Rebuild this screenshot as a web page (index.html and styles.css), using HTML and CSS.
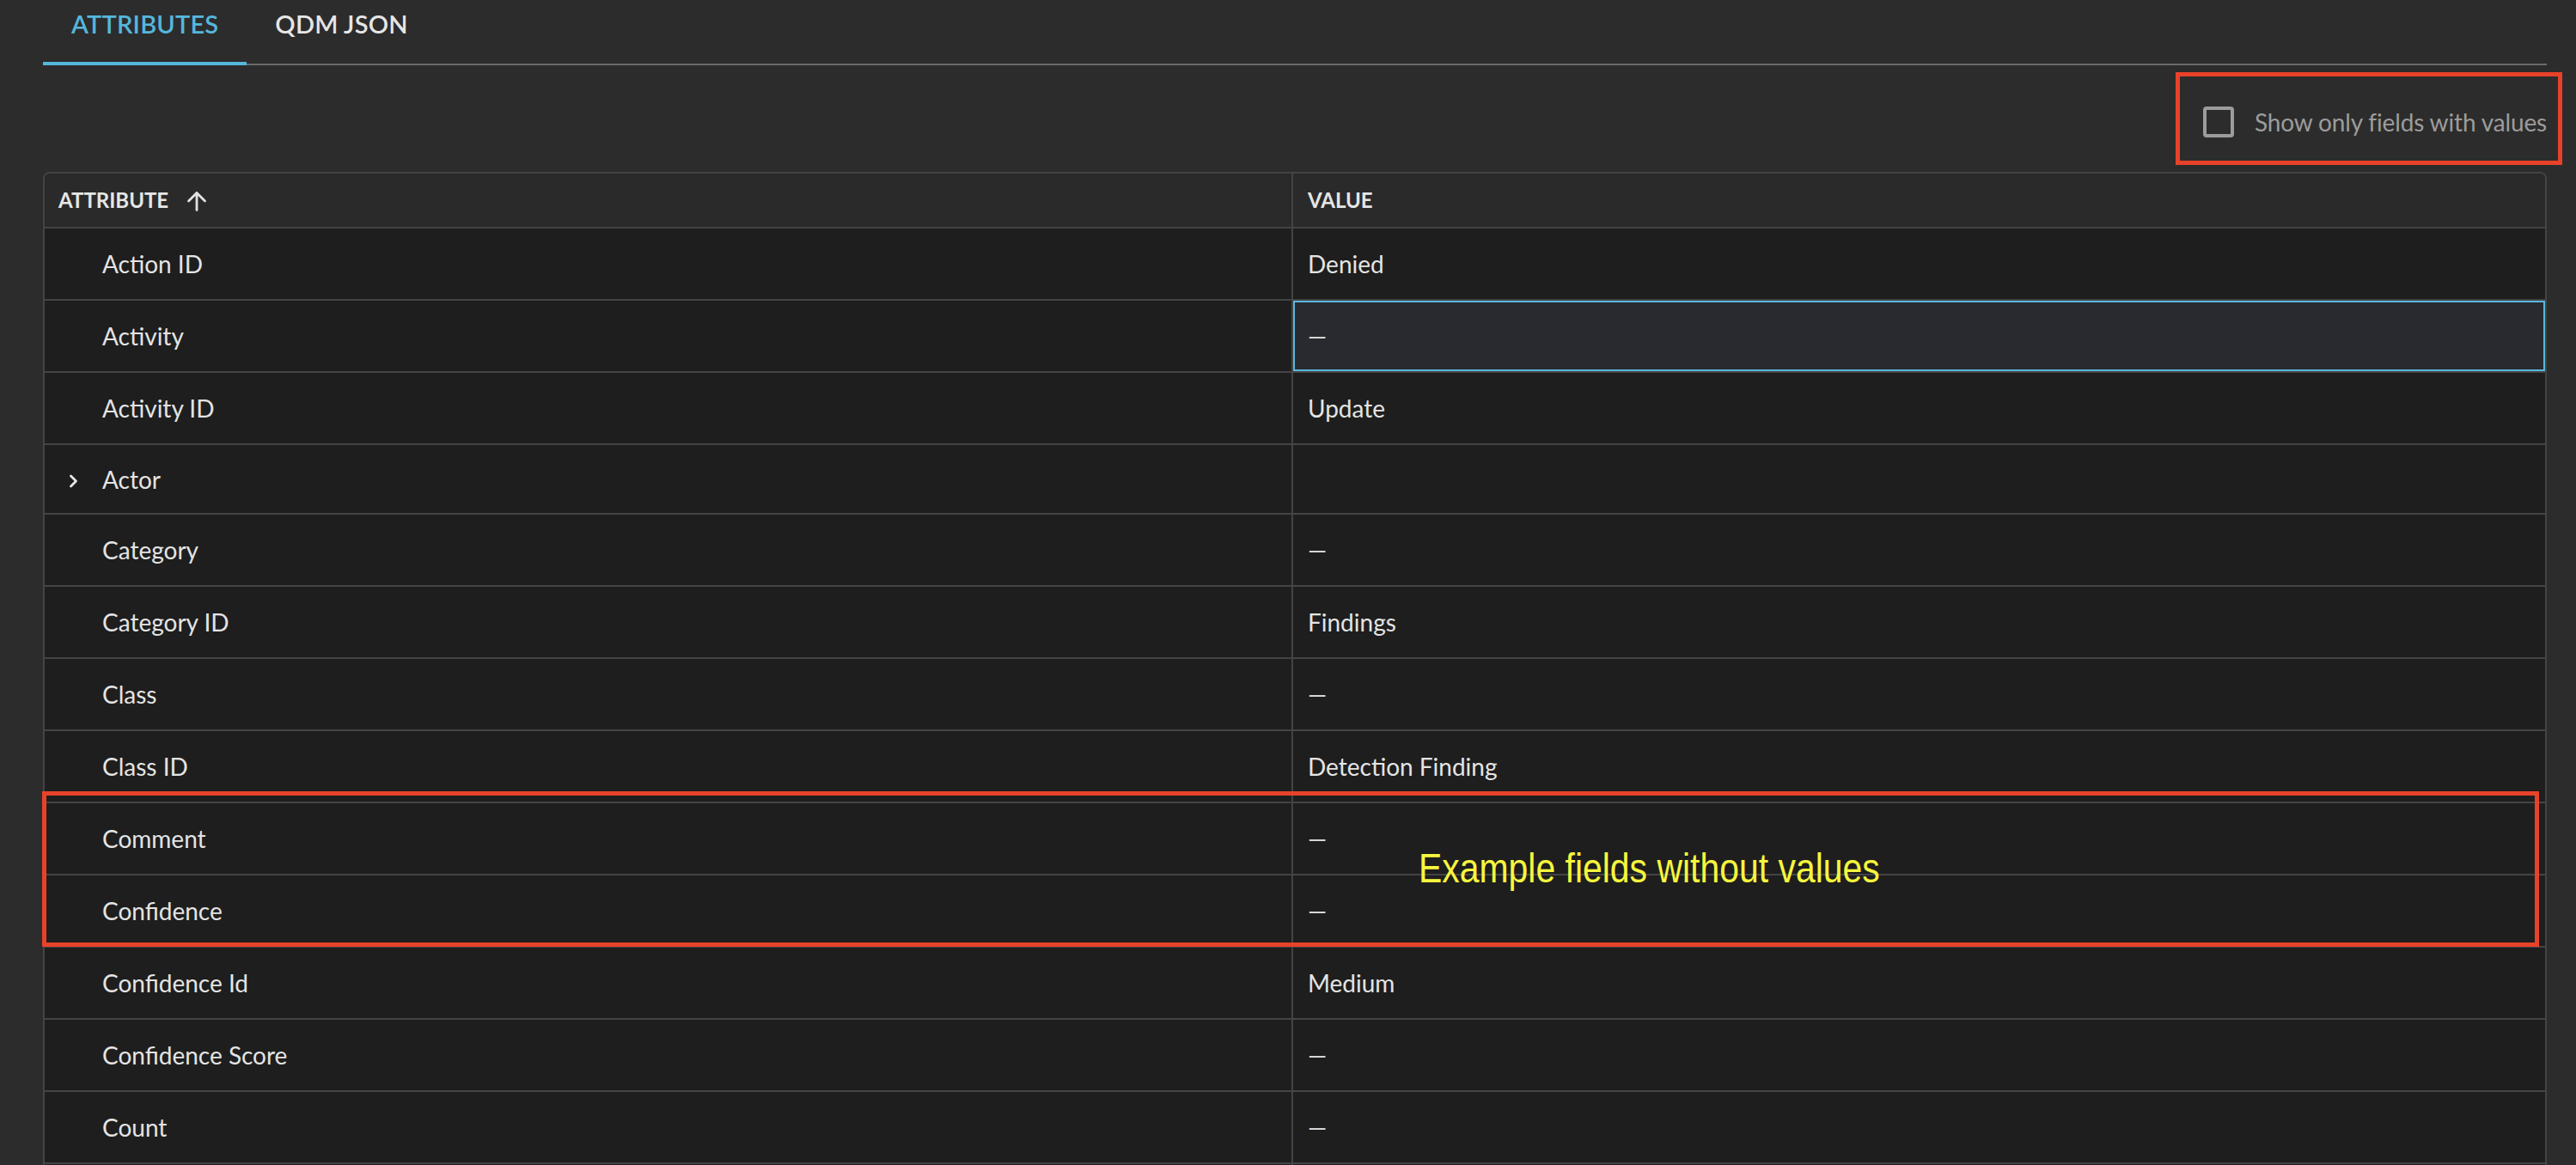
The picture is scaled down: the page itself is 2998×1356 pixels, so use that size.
FILE: index.html
```html
<!DOCTYPE html>
<html>
<head>
<meta charset="utf-8">
<link rel="stylesheet" href="styles.css">
</head>
<body>
<div class="page">
  <div class="tabs">
    <div class="tab active">ATTRIBUTES</div>
    <div class="tab">QDM JSON</div>
  </div>
  <div class="filter-row">
    <span class="checkbox"></span>
    <span class="filter-label">Show only fields with values</span>
  </div>
  <div class="table">
    <div class="row head">
      <div class="cell attr"><span class="head-text">ATTRIBUTE</span>
        <svg class="sort-icon" viewBox="0 0 24 24" width="24" height="24"><path d="M12 22.5V2.5M2.5 12L12 2.5l9.5 9.5" fill="none" stroke="#e2e2e2" stroke-width="2.8" stroke-linecap="round" stroke-linejoin="round"/></svg>
      </div>
      <div class="cell val"><span class="head-text">VALUE</span></div>
    </div>
    <div class="row"><div class="cell attr"><span class="slot"></span>Action ID</div><div class="cell val">Denied</div></div>
    <div class="row"><div class="cell attr"><span class="slot"></span>Activity</div><div class="cell val selected"><span class="dash">—</span></div></div>
    <div class="row"><div class="cell attr"><span class="slot"></span>Activity ID</div><div class="cell val">Update</div></div>
    <div class="row short"><div class="cell attr"><span class="slot"><svg class="chev" viewBox="0 0 12 16" width="12" height="16"><path d="M2.5 2l6 6-6 6" fill="none" stroke="#e6e6e6" stroke-width="2.8" stroke-linecap="round" stroke-linejoin="round"/></svg></span>Actor</div><div class="cell val"></div></div>
    <div class="row"><div class="cell attr"><span class="slot"></span>Category</div><div class="cell val"><span class="dash">—</span></div></div>
    <div class="row"><div class="cell attr"><span class="slot"></span>Category ID</div><div class="cell val">Findings</div></div>
    <div class="row"><div class="cell attr"><span class="slot"></span>Class</div><div class="cell val"><span class="dash">—</span></div></div>
    <div class="row"><div class="cell attr"><span class="slot"></span>Class ID</div><div class="cell val">Detection Finding</div></div>
    <div class="row"><div class="cell attr"><span class="slot"></span>Comment</div><div class="cell val"><span class="dash">—</span></div></div>
    <div class="row"><div class="cell attr"><span class="slot"></span>Confidence</div><div class="cell val"><span class="dash">—</span></div></div>
    <div class="row"><div class="cell attr"><span class="slot"></span>Confidence Id</div><div class="cell val">Medium</div></div>
    <div class="row"><div class="cell attr"><span class="slot"></span>Confidence Score</div><div class="cell val"><span class="dash">—</span></div></div>
    <div class="row"><div class="cell attr"><span class="slot"></span>Count</div><div class="cell val"><span class="dash">—</span></div></div>
    <div class="row"><div class="cell attr"></div><div class="cell val"></div></div>
  </div>
</div>
<div class="annot annot-filter"></div>
<div class="annot annot-rows"></div>
<div class="annot-text">Example fields without values</div>
</body>
</html>
```
FILE: styles.css
```css
html, body {
  margin: 0;
  padding: 0;
  background: #2c2c2c;
  height: 1356px;
  overflow: hidden;
}
body {
  font-family: "Lato", "Noto Sans", sans-serif;
  color: #e4e4e4;
  position: relative;
}
.page {
  margin-left: 50px;
  width: 2914px;
}
.tabs {
  display: flex;
  height: 74px;
  border-bottom: 2px solid #6a6a6a;
}
.tab {
  position: relative;
  padding: 10px 33px 0;
  font-size: 29px;
  font-weight: 600;
  line-height: 35px;
  color: #e6e6e6;
  letter-spacing: 0.2px;
}
.tab.active {
  color: #55b7dc;
}
.tab.active::after {
  content: "";
  position: absolute;
  left: 0;
  right: 0;
  bottom: -2px;
  height: 4px;
  background: #55b7dc;
}
.filter-row {
  display: flex;
  justify-content: flex-end;
  align-items: center;
  height: 124px;
  padding-top: 8px;
  box-sizing: border-box;
}
.checkbox {
  width: 36px;
  height: 36px;
  box-sizing: border-box;
  border: 4px solid #9c9c9c;
  border-radius: 4px;
  margin-right: 24px;
}
.filter-label {
  font-size: 28px;
  color: #9c9c9c;
  line-height: 34px;
  letter-spacing: -0.15px;
}
.table {
  border: 2px solid #444444;
  border-bottom: none;
  border-radius: 8px 8px 0 0;
  overflow: hidden;
  background: #1e1e1e;
}
.row {
  display: flex;
  height: 82px;
  border-bottom: 2px solid #444444;
}
.row.short {
  height: 79px;
}
.row.head {
  height: 62px;
  background: #2a2a2a;
}
.cell {
  display: flex;
  align-items: center;
  font-size: 28px;
  line-height: 34px;
  box-sizing: border-box;
}
.cell.attr {
  width: 1453px;
  border-right: 2px solid #444444;
  padding-left: 17px;
}
.cell.val {
  flex: 1;
  padding-left: 17px;
}
.row.head .cell.attr {
  padding-left: 16px;
}
.head-text {
  font-size: 24px;
  font-weight: 700;
  color: #e6e6e6;
}
.sort-icon {
  margin-left: 21px;
  margin-top: 1px;
}
.slot {
  width: 50px;
  display: flex;
  align-items: center;
  padding-left: 11px;
  box-sizing: border-box;
  height: 34px;
  margin-top: 4px;
}
.cell.selected {
  background: #282a30;
  box-shadow: inset 0 0 0 2px #57b9dc;
}
.dash {
  color: #d6d6d6;
}
.annot {
  position: absolute;
  border: 5px solid #e8422a;
  box-sizing: border-box;
}
.annot-filter {
  left: 2532px;
  top: 84px;
  width: 450px;
  height: 108px;
}
.annot-rows {
  left: 49px;
  top: 921px;
  width: 2906px;
  height: 181px;
}
.annot-text {
  position: absolute;
  left: 1651px;
  top: 986px;
  font-family: "Liberation Sans", sans-serif;
  font-size: 49px;
  line-height: 49px;
  color: #f6f63e;
  white-space: nowrap;
  transform: scaleX(0.835);
  transform-origin: left top;
}
```
